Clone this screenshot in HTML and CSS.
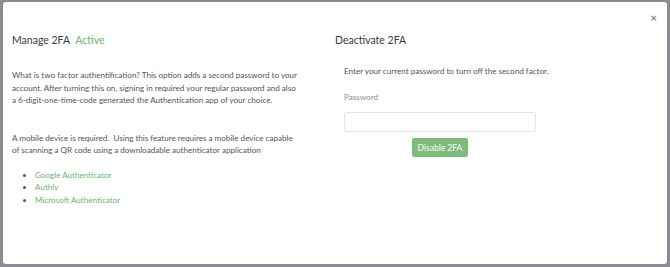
FILE: index.html
```html
<!DOCTYPE html>
<html lang="en">
<head>
    <meta charset="UTF-8">
    <title>Manage 2FA</title>
    <link rel="stylesheet" href="styles.css">
</head>
<body>
    <div class="backdrop">
        <div class="modal">
            <div class="modal-top">
                <span class="close">&times;</span>
            </div>
            <div class="modal-body">
                <div class="col">
                    <h2>Manage 2FA <span class="status">Active</span></h2>
                    <div class="info">
                        <p>What is two factor authentification? This option adds a second password to your<br>account. After turning this on, signing in required your regular password and also<br>a 6-digit-one-time-code generated the Authentication app of your choice.</p>
                        <p class="gap">A mobile device is required.&nbsp; Using this feature requires a mobile device capable<br>of scanning a QR code using a downloadable authenticator application</p>
                        <ul>
                            <li><a href="#">Google Authenticator</a></li>
                            <li><a href="#">Authly</a></li>
                            <li><a href="#">Microsoft Authenticator</a></li>
                        </ul>
                    </div>
                </div>
                <div class="col">
                    <h2>Deactivate 2FA</h2>
                    <div class="form">
                        <p>Enter your current password to turn off the second factor.</p>
                        <label for="pw">Password</label>
                        <input type="password" id="pw">
                        <div class="actions">
                            <button>Disable 2FA</button>
                        </div>
                    </div>
                </div>
            </div>
        </div>
    </div>
</body>
</html>
```

FILE: styles.css
```css
body {
    margin: 0;
    font-family: Lato, "Open Sans", sans-serif;
    color: #4f5561;
    background-color: #8b8b94;
}

.backdrop {
    height: 267px;
    padding: 2px 3px 3px 3px;
    box-sizing: border-box;
}

.modal {
    height: 100%;
    background-color: #fff;
    border-radius: 3px;
    padding: 0 9px;
    box-sizing: border-box;
}

.modal-top {
    display: flex;
    justify-content: flex-end;
    height: 22px;
    padding-top: 10px;
    box-sizing: border-box;
}

.close {
    font-size: 11px;
    line-height: 11px;
    color: #80848c;
    margin-right: 1px;
    font-weight: bold;
}

.modal-body {
    display: flex;
}

.col {
    flex: 1;
}

h2 {
    font-size: 10.5px;
    font-weight: normal;
    color: #353c4a;
    margin: 9px 0 0 0;
    line-height: 14px;
}

.status {
    color: #6ab56a;
    margin-left: 3px;
}

.info {
    width: 310px;
    padding-top: 22px;
    font-size: 8.1px;
    line-height: 12.5px;
}

.info p {
    margin: 0;
}

.info p.gap {
    margin-top: 25px;
}

ul {
    margin: 12px 0 0 0;
    padding-left: 23px;
}

ul a {
    color: #6ab56a;
    text-decoration: none;
}

.form {
    width: 192px;
    padding: 18px 0 0 9px;
    font-size: 8.1px;
}

.form p {
    margin: 0;
    white-space: nowrap;
    line-height: 12px;
}

.form label {
    display: block;
    color: #8a8e96;
    margin-top: 14px;
    line-height: 12px;
}

.form input {
    display: block;
    width: 192px;
    height: 20px;
    box-sizing: border-box;
    margin-top: 9px;
    border: 1px solid #e3e4e7;
    border-radius: 2px;
    outline: none;
}

.actions {
    text-align: center;
    margin-top: 6px;
}

.actions button {
    font-family: inherit;
    font-size: 8.5px;
    color: #fff;
    background-color: #7dbb7d;
    border: none;
    border-radius: 2px;
    width: 56px;
    height: 19px;
    padding: 0;
}
```
